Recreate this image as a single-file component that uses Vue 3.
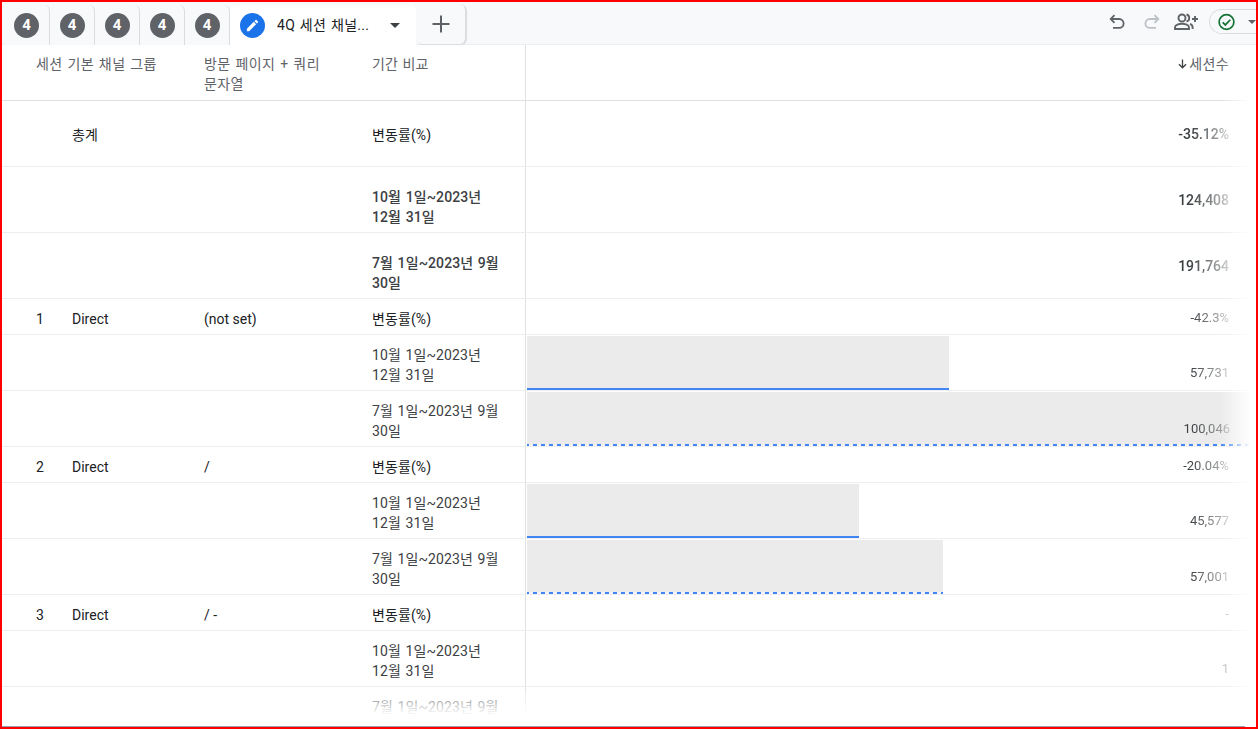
<script setup>
const d1 = '10월 1일~2023년 12월 31일'
const d2 = '7월 1일~2023년 9월 30일'
const pct = '변동률(%)'
const rows = [
  { kind: 'total first', name: '총계', date: pct, val: '-35.12%' },
  { kind: 'total', date: d1, val: '124,408' },
  { kind: 'total', date: d2, val: '191,764' },
  { kind: 'short', rank: '1', name: 'Direct', page: '(not set)', date: pct, val: '-42.3%' },
  { kind: 'tall', date: d1, val: '57,731', bar: 422 },
  { kind: 'tall', date: d2, val: '100,046', bar: 730, dashed: true },
  { kind: 'short', rank: '2', name: 'Direct', page: '/', date: pct, val: '-20.04%' },
  { kind: 'tall', date: d1, val: '45,577', bar: 332 },
  { kind: 'tall', date: d2, val: '57,001', bar: 416, dashed: true },
  { kind: 'short', rank: '3', name: 'Direct', page: '/ -', date: pct, val: '-' },
  { kind: 'tall', date: d1, val: '1' },
  { kind: 'tall last', date: '7월 1일~2023년 9월', val: '' }
]
const tabs = [1, 2, 3, 4, 5]
</script>

<template>
  <div class="app">
    <header class="bar">
      <div v-for="t in tabs" :key="t" class="tab">
        <span class="badge">4</span>
      </div>
      <div class="tab active">
        <span class="badge blue">
          <svg width="15" height="15" viewBox="0 0 24 24"><path fill="#fff" d="M3 17.25V21h3.75L17.81 9.94l-3.75-3.75L3 17.25zM20.71 7.04a1 1 0 0 0 0-1.41l-2.34-2.34a1 1 0 0 0-1.41 0l-1.83 1.83 3.75 3.75 1.83-1.83z"/></svg>
        </span>
        <span class="tab-title">4Q 세션 채널...</span>
        <span class="caret"></span>
      </div>
      <div class="tab plus">
        <svg width="18" height="18" viewBox="0 0 18 18"><path d="M9 0.5v17M0.5 9h17" stroke="#5f6368" stroke-width="2" fill="none"/></svg>
      </div>
      <div class="tools">
        <svg class="undo" width="16" height="15" viewBox="0 0 16 15"><path d="M5.5 1.2 1.7 5l3.8 3.8M2 5h8.2a4.4 4.4 0 0 1 0 8.8H4" fill="none" stroke="#5f6368" stroke-width="1.8"/></svg>
        <svg class="redo" width="16" height="15" viewBox="0 0 16 15"><path d="M10.5 1.2 14.3 5l-3.8 3.8M14 5H5.8a4.4 4.4 0 0 0 0 8.8H12" fill="none" stroke="#bdc1c6" stroke-width="1.8"/></svg>
        <svg class="people" width="25" height="17" viewBox="0 0 25 17"><circle cx="8" cy="5" r="3.5" fill="none" stroke="#5f6368" stroke-width="1.9"/><path d="M1 16v-1.6c0-2.4 4-3.6 7-3.6s7 1.2 7 3.6V16z" fill="none" stroke="#5f6368" stroke-width="1.9"/><path d="M12.5 1.5a3.6 3.6 0 0 1 0 7M16 10.8c1.6.7 2.6 1.8 2.6 3.4V16" fill="none" stroke="#5f6368" stroke-width="1.9"/><path d="M21 3v6M18 6h6" stroke="#5f6368" stroke-width="1.9"/></svg>
        <div class="status">
          <svg width="18" height="18" viewBox="0 0 18 18"><circle cx="9" cy="9" r="7.8" fill="none" stroke="#137333" stroke-width="1.8"/><path d="M5 9.3l2.8 2.8L13 6.6" fill="none" stroke="#137333" stroke-width="1.8"/></svg>
          <span class="caret small"></span>
        </div>
      </div>
    </header>

    <section class="table">
      <div class="row head">
        <div class="c-dim">세션 기본 채널 그룹</div>
        <div class="c-page">방문 페이지 + 쿼리 문자열</div>
        <div class="c-date">기간 비교</div>
        <div class="c-chart">
          <span class="sort"><svg width="9" height="10" viewBox="0 0 9 10"><path d="M4.5 0.5v8M1 5.2l3.5 3.6L8 5.2" fill="none" stroke="#3c4043" stroke-width="1.3"/></svg>세션수</span>
        </div>
      </div>
      <div v-for="(r, i) in rows" :key="i" class="row" :class="r.kind">
        <div class="c-rank">{{ r.rank }}</div>
        <div class="c-name">{{ r.name }}</div>
        <div class="c-pg">{{ r.page }}</div>
        <div class="c-date">{{ r.date }}</div>
        <div class="c-chart">
          <div v-if="r.bar" class="fill" :class="{ dashed: r.dashed }" :style="{ width: r.bar + 'px' }"></div>
          <div class="val">{{ r.val }}</div>
        </div>
      </div>
      <div class="fade-right"></div>
      <div class="fade-bottom"></div>
    </section>
    <div class="rule"></div>
  </div>
</template>

<style>
html, body { margin: 0; background: #fff; }
</style>

<style scoped>
.app {
  width: 1258px; height: 729px; box-sizing: border-box; border: 2px solid #f00;
  background: #fff; overflow: hidden; display: flex; flex-direction: column;
  font-family: Roboto, "Noto Sans CJK KR", sans-serif; font-size: 14px; line-height: 20px; color: #3c4043;
}
.bar {
  height: 43px; flex: none; box-sizing: border-box; background: #f8f9fa; border-bottom: 1px solid #eceef0;
  display: flex; align-items: flex-end; padding-left: 2px;
}
.tab {
  width: 45px; height: 40px; box-sizing: border-box; border-radius: 6px 6px 0 0;
  border-right: 1px solid #dadce0; display: flex; align-items: center; justify-content: center; background: #f8f9fa;
  margin-bottom: -1px; flex: none;
}
.tab:first-child { width: 46px; }
.badge {
  width: 25px; height: 25px; border-radius: 50%; background: #5f6368; color: #fff; font-weight: 700; font-size: 15px;
  display: flex; align-items: center; justify-content: center; flex: none;
}
.badge.blue { background: #1a73e8; }
.tab.active {
  width: 186px; background: #fff; border-right: 0; justify-content: flex-start; padding-left: 10px;
}
.tab-title { margin-left: 12px; color: #202124; font-size: 14px; letter-spacing: .3px; word-spacing: 1px; width: 113px; white-space: nowrap; }
.caret { width: 0; height: 0; border: 5px solid transparent; border-top-color: #3c4043; border-bottom: 0; }
.tab.plus {
  width: 50px; height: 40px; margin-left: 0; border-radius: 6px; margin-bottom: 0;
  box-shadow: 1px 1px 1px #dadce0;
}
.tools { margin-left: auto; align-self: stretch; display: flex; align-items: flex-start; padding-top: 11px; }
.undo { margin-top: 1px; }
.redo { margin: 1px 0 0 19px; }
.people { margin: 0 0 0 14px; }
.status {
  margin: -4px 0 0 10px; width: 47px; height: 25px; box-sizing: border-box; border: 1px solid #dadce0; border-right: 0;
  border-radius: 13px 0 0 13px; display: flex; align-items: center; padding-left: 8px; gap: 13px;
}
.caret.small { border-top-color: #5f6368; border-width: 4px; border-bottom: 0; }

.table { position: relative; flex: 1; min-height: 0; overflow: hidden; }
.row {
  display: grid; grid-template-columns: 34px 36px 132px 168px 154px 1fr; box-sizing: border-box;
  border-bottom: 1px solid #eeeeee; color: #202124;
}
.head { grid-template-columns: 34px 168px 168px 154px 1fr; height: 56px; border-bottom-color: #e0e0e0; color: #5f6368; letter-spacing: .4px; word-spacing: 1px; }
.head .c-dim { grid-column: 2; padding-top: 9px; }
.head .c-page { padding: 9px 30px 0 0; word-break: keep-all; }
.head .c-date { padding-top: 9px; color: #5f6368; }
.head .c-chart { justify-items: end; padding-top: 9px; }
.sort { margin-right: 27px; display: flex; align-items: center; gap: 2px; align-self: start; letter-spacing: .4px; }
.c-rank { grid-column: 2; }
.c-date { border-right: 1px solid #e0e0e0; padding-right: 21px; word-break: keep-all; color: #3c4043; letter-spacing: .1px; word-spacing: 1px; }
.c-chart { display: grid; min-width: 0; }
.fill {
  grid-area: 1 / 1; align-self: start; height: 54px; margin-left: 1px; margin-top: 1px; box-sizing: border-box;
  background: #ebebeb; border-bottom: 2px solid #4285f4;
}
.fill.dashed {
  border-bottom: 0;
  background: repeating-linear-gradient(to right, #4285f4 0 2px, #f4f4f4 2px 6px, #4285f4 6px 8px) bottom / 100% 2px no-repeat, #ebebeb;
}
.val {
  grid-area: 1 / 1; justify-self: end; margin-right: 27px; width: 70px; text-align: right; color: #3c4043; font-size: 13px;
  -webkit-mask-image: linear-gradient(to right, #000 45%, rgba(0,0,0,.3) 100%);
  mask-image: linear-gradient(to right, #000 45%, rgba(0,0,0,.3) 100%);
}

.total { height: 66px; }
.total > div { padding-top: 20px; font-weight: 500; }
.total .c-chart { padding-top: 0; }
.total .val { padding-top: 23px; font-weight: 500; font-size: 14px; }
.total.first > div { padding-top: 24px; }
.total.first .c-date { color: #202124; font-weight: 400; }
.total.first .c-chart { padding-top: 0; }
.total.first .c-name { font-weight: 400; }
.short { height: 36px; }
.short > div { padding-top: 10px; }
.short .c-date { color: #202124; }
.short .c-chart { padding-top: 0; }
.short .val { padding-top: 9px; }
.tall { height: 56px; }
.tall > div { padding-top: 10px; }
.tall .c-chart { padding-top: 0; }
.tall .val { padding-top: 28px; }
.last { height: 39px; border-bottom: 0; }

.fade-right {
  position: absolute; top: 0; bottom: 0; right: 0; width: 36px;
  background: linear-gradient(to right, rgba(255,255,255,0), #fff 85%);
}
.fade-bottom {
  position: absolute; left: 0; right: 0; bottom: 0; height: 36px;
  background: linear-gradient(to bottom, rgba(255,255,255,.2), rgba(255,255,255,.75) 45%, rgba(255,255,255,.9) 60%, #fff 72%);
}
.rule { height: 1px; flex: none; width: 1243px; background: #9aa0a6; }
</style>
